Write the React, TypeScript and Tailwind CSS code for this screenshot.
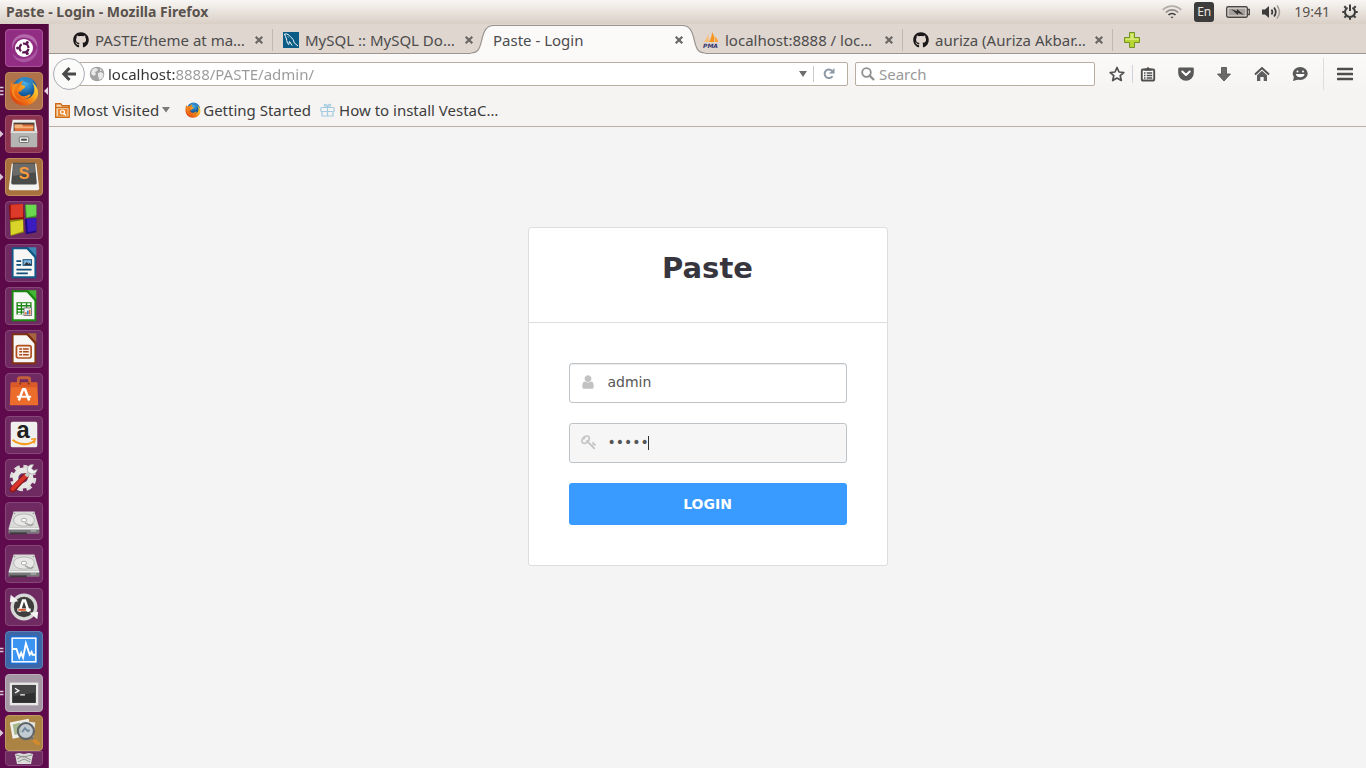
import type { ReactNode } from "react";
import { FaGithub } from "react-icons/fa";

/* ---------- small shared drawings ---------- */

function FirefoxLogo({ className }: { className?: string }) {
  return (
    <svg viewBox="0 0 32 32" className={className} aria-hidden="true">
      <defs>
        <radialGradient id="ffGlobe" cx="0.5" cy="0.25" r="0.75">
          <stop offset="0" stopColor="#4fb4e6" />
          <stop offset="0.5" stopColor="#1c6cb0" />
          <stop offset="1" stopColor="#0c2a5e" />
        </radialGradient>
        <linearGradient id="ffTail" x1="1" y1="0.1" x2="0.1" y2="0.9">
          <stop offset="0" stopColor="#ffe14a" />
          <stop offset="0.35" stopColor="#fbb021" />
          <stop offset="0.7" stopColor="#ee6a14" />
          <stop offset="1" stopColor="#d63d0c" />
        </linearGradient>
      </defs>
      <circle cx="17" cy="14" r="13" fill="url(#ffGlobe)" />
      <path d="M14 3c4-2 9-1 12 2-2 1-3 2-5 2s-5 0-7-4z" fill="#2f86c4" />
      <path
        d="M3 5c0 2 .3 3.300 1 4.500C5.500 8.500 8 8 10 8.500 11 7 13 5.500 15 5.200c-1.600 1.600-2 3.200-1.800 4.500 1.300.6 3.300.7 4 1.200.3 1.200-1.200 2.500-3.200 3.400-.8.5-.8 1.700-.8 2.500-1.200-.5-2.500-.3-3.200.4 1 3.200 3.800 4.700 6.800 4.300 3-.5 4.200-2.500 6.700-1.700-1.200 3.200-4.500 4.500-7.500 4.200 5.500 1 11-3 11-9.500 0-3.500-1-6-2.500-8 4 3 6.500 7 6.500 11.500C31 25 24.500 31.500 16 31.500S1 25 1 17C1 12 1.500 8 3 5z"
        fill="url(#ffTail)"
      />
      <path d="M4 9.500C2.500 13 2.500 19 6 23c3 3.500 8 5 12 4-6 .5-11-3-12-8-.6-3.500 0-6 4-10.500-2-.4-4.500 0-6 1z" fill="#f58a1f" />
      <path d="M10 8.500c-2 2-2.800 3.500-2.800 5.500l6-4.300c-.2-1.300.2-2.900 1.800-4.500-2 .3-4 1.800-5 3.300z" fill="#ef7a1a" />
    </svg>
  );
}

function CloseMark() {
  return (
    <svg viewBox="0 0 10 10" className="size-[10px]" aria-hidden="true">
      <path d="M2.500 2.500l5 5M7.500 2.500l-5 5" stroke="#6b6763" strokeWidth="2.200" strokeLinecap="square" />
    </svg>
  );
}

function PageCorner({ frame, fold, children }: { frame: string; fold: string; children: ReactNode }) {
  return (
    <svg viewBox="0 0 38 38" className="size-full">
      <path d="M6 2.500h18l8 8V35H6z" fill={frame} />
      <path d="M8 4.500h14.500L30 12v21H8z" fill="#f7f7f5" />
      <path d="M23 2.500h9V12z" fill={fold} />
      <path d="M20 2.500h3l9 10v3z" fill={frame} />
      {children}
    </svg>
  );
}

/* ---------- launcher ---------- */

function DiskIcon() {
  return (
    <svg viewBox="0 0 38 38" className="size-full">
      <path d="M8 9h22l5 17v6H3v-6z" fill="#d9d9d7" />
      <path d="M3 26h32v6H3z" fill="#77787a" />
      <path d="M3 26h32v2H3z" fill="#f2f2f2" />
      <path d="M4 31h18v2H4z" fill="#3b3b3d" />
      <ellipse cx="19" cy="18" rx="11" ry="6.500" fill="#e8e8e6" stroke="#b4b4b2" />
      <ellipse cx="19" cy="18" rx="3" ry="2" fill="#fafafa" stroke="#a9a9a8" />
      <path d="M20 21l6 3 3-2" stroke="#a3a3a2" strokeWidth="1.500" fill="none" />
      <circle cx="9" cy="11" r=".8" fill="#909090" />
      <circle cx="29" cy="11" r=".8" fill="#909090" />
      <path d="M26 29.500h6" stroke="#c9cacb" strokeWidth="1" />
    </svg>
  );
}

type Pip = "none" | "arrow" | "two" | "three";
interface App {
  name: string;
  tile: string;
  pip?: Pip;
  active?: boolean;
  icon: ReactNode;
}

const glass = "bg-[#6f2a62] border-[#864678]";

const apps: App[] = [
  {
    name: "Search your computer",
    tile: "bg-[#922d84] border-[#a8549a]",
    icon: (
      <svg viewBox="0 0 38 38" className="size-full">
        <path d="M7 21C4 10 13 2 24 5c7 2 10 8 9 14-2-8-9-12-16-11-6 1-10 6-10 13z" fill="#b56bab" />
        <path d="M33 17c2 9-5 17-14 17-6 0-11-4-12-9 4 5 9 6 14 5 6-1 11-6 12-13z" fill="#a955a0" />
        <circle cx="19" cy="19" r="9.500" fill="#fff" />
        <circle cx="19" cy="19" r="4.700" fill="none" stroke="#5f1a55" strokeWidth="2.400" strokeDasharray="8.300 1.540" strokeDashoffset="-.8" />
        <circle cx="12.200" cy="19" r="1.600" fill="#5f1a55" />
        <circle cx="22.400" cy="13.100" r="1.600" fill="#5f1a55" />
        <circle cx="22.400" cy="24.900" r="1.600" fill="#5f1a55" />
      </svg>
    ),
  },
  {
    name: "Firefox",
    tile: "bg-[#b0724a] border-[#c08a62]",
    pip: "three",
    active: true,
    icon: <FirefoxLogo className="size-full p-[3px]" />,
  },
  {
    name: "Files",
    tile: "bg-[#8c3350] border-[#a05068]",
    pip: "arrow",
    icon: (
      <svg viewBox="0 0 38 38" className="size-full">
        <path d="M7 4h24l2 12H5z" fill="#eeeeec" />
        <path d="M8 7h22v10H8z" fill="#4b4039" />
        <path d="M9 9h20v7H9z" fill="#e0703a" />
        <path d="M9 9h8l1 2h11v2H9z" fill="#f5b27c" />
        <path d="M5 16h28v16a1 1 0 0 1-1 1H6a1 1 0 0 1-1-1z" fill="#b5b5b3" />
        <path d="M5 16h28v2H5z" fill="#dededc" />
        <rect x="14" y="22" width="10" height="6" rx="1.500" fill="#eee" stroke="#6e6e6c" />
        <path d="M16 25h6" stroke="#444" strokeWidth="2" />
      </svg>
    ),
  },
  {
    name: "Sublime Text",
    tile: "bg-[#a8713e] border-[#bd8d5e]",
    pip: "arrow",
    icon: (
      <svg viewBox="0 0 38 38" className="size-full">
        <path d="M6 5h26l3 26a2 2 0 0 1-2 2H5a2 2 0 0 1-2-2z" fill="#f3f3f1" />
        <path d="M7.500 4h23l2 21a2 2 0 0 1-2 2h-23a2 2 0 0 1-2-2z" fill="#4b4b49" />
        <path d="M8 5h22l1 9-24 4z" fill="#6b6b69" />
        <text x="19" y="21" fontFamily="Liberation Sans, sans-serif" fontSize="17" fontWeight="bold" textAnchor="middle" fill="#f59a3c">S</text>
      </svg>
    ),
  },
  {
    name: "Code::Blocks",
    tile: glass,
    icon: (
      <svg viewBox="0 0 38 38" className="size-full">
        <path d="M3 3l15-1 1 16-15 1z" fill="#8d0e06" />
        <path d="M5 3l13-1v14l-13 1z" fill="#dd3a2a" />
        <path d="M20 3h12v13l-11 1z" fill="#3a9f26" />
        <path d="M21 3h11v11l-10 2z" fill="#6bd950" />
        <path d="M4 19l14-1 1 14-14 4z" fill="#8e890c" />
        <path d="M5 21l13-2v12l-13 4z" fill="#d8d42a" />
        <path d="M20 18l12-1v15l-11 2z" fill="#1d0a80" />
        <path d="M22 18l10-1v13l-9 2z" fill="#3a1cc0" />
      </svg>
    ),
  },
  {
    name: "LibreOffice Writer",
    tile: glass,
    icon: (
      <PageCorner frame="#0f5a86" fold="#3f86b5">
        <path d="M11 17h5M11 21h5M11 26h16M11 30h12" stroke="#124f78" strokeWidth="2" />
        <rect x="18" y="15.500" width="9" height="6" fill="#7db4da" stroke="#124f78" />
        <path d="M19 21l3-3 2 2 1-1 2 2z" fill="#333" />
      </PageCorner>
    ),
  },
  {
    name: "LibreOffice Calc",
    tile: glass,
    icon: (
      <PageCorner frame="#1a8a10" fold="#45b535">
        <path d="M11 15h16v13H11z" fill="#1d8714" />
        <path d="M12.500 17h3M17 17h4M22.500 17h3M12.500 20.500h3M17 20.500h4M22.500 20.500h3M12.500 24h3M17 24h4M12.500 27h3M17 27h4" stroke="#fff" strokeWidth="1.800" />
        <rect x="19" y="21" width="8" height="8" fill="#f6f6f6" stroke="#777" />
        <path d="M21 28v-2.500M25 28v-5" stroke="#e06a28" strokeWidth="1.800" />
        <path d="M23 28v-4" stroke="#2a79c8" strokeWidth="1.800" />
      </PageCorner>
    ),
  },
  {
    name: "LibreOffice Impress",
    tile: glass,
    icon: (
      <PageCorner frame="#7e3210" fold="#a7643e">
        <rect x="11" y="15.500" width="15.500" height="13" rx="2" fill="#fbeee6" stroke="#b0501f" strokeWidth="1.800" />
        <path d="M14 19h3M14 22h3M14 25h3M18 19h6M18 22h6M18 25h6" stroke="#a8481a" strokeWidth="1.600" />
      </PageCorner>
    ),
  },
  {
    name: "Ubuntu Software",
    tile: glass,
    icon: (
      <svg viewBox="0 0 38 38" className="size-full">
        <path d="M13 12V6a2 2 0 0 1 2-2h8a2 2 0 0 1 2 2v6" stroke="#c4603d" strokeWidth="3" fill="none" />
        <path d="M5 9h28l1 24H4z" fill="#ec6c2c" />
        <path d="M5 9h28v5H5z" fill="#d95a26" />
        <path d="M14 10h2M23 10h2" stroke="#8c3418" strokeWidth="2" />
        <path d="M13.500 28L18 16h2l4.500 12" stroke="#fff" strokeWidth="2.600" fill="none" strokeLinejoin="round" />
        <path d="M11.500 24h15" stroke="#fff" strokeWidth="2" />
      </svg>
    ),
  },
  {
    name: "Amazon",
    tile: glass,
    icon: (
      <svg viewBox="0 0 38 38" className="size-full">
        <rect x="5" y="5" width="28" height="27" rx="2" fill="#f0f0ee" />
        <text x="18" y="22" fontFamily="Liberation Sans, sans-serif" fontSize="25" fontWeight="bold" textAnchor="middle" fill="#1f1f1f">a</text>
        <path d="M7 24c7 6 17 6 23 1" stroke="#f49b1e" strokeWidth="2.200" fill="none" />
        <path d="M26.500 23.500l4.500-.5-1.500 5" stroke="#f49b1e" strokeWidth="1.600" fill="none" />
      </svg>
    ),
  },
  {
    name: "System Settings",
    tile: glass,
    icon: (
      <svg viewBox="0 0 38 38" className="size-full">
        <circle cx="18" cy="19" r="11" fill="none" stroke="#dcdcda" strokeWidth="6" strokeDasharray="5.200 3.440" />
        <circle cx="18" cy="19" r="8" fill="none" stroke="#e6e6e4" strokeWidth="6" />
        <path d="M7 31L21 17" stroke="#8e1512" strokeWidth="6" strokeLinecap="round" />
        <path d="M7 30.500L20 17.500" stroke="#d9342c" strokeWidth="4" strokeLinecap="round" />
        <path d="M21 17l6-6" stroke="#c9c9c9" strokeWidth="4" />
        <path d="M29 5c-4-1-8 3-6 7 2 4 9 4 10-2l-4 1-2-2z" fill="#f1f1f1" stroke="#9d9d9d" strokeWidth=".8" />
      </svg>
    ),
  },
  { name: "Disk 1", tile: glass, icon: <DiskIcon /> },
  { name: "Disk 2", tile: glass, icon: <DiskIcon /> },
  {
    name: "Software Updater",
    tile: glass,
    icon: (
      <svg viewBox="0 0 38 38" className="size-full">
        <circle cx="19" cy="19" r="12.500" fill="#3e3d3b" stroke="#d8d8d6" strokeWidth="3.500" />
        <path d="M4 14l1-8 8 7z" fill="#f4f4f2" />
        <path d="M34 24l-1 8-8-7z" fill="#f4f4f2" />
        <path d="M14 24l4-12h2l4 12" stroke="#fff" strokeWidth="2.600" fill="none" />
        <path d="M12 22h14" stroke="#fff" strokeWidth="3" />
        <path d="M13 22h8" stroke="#e2542a" strokeWidth="2" />
      </svg>
    ),
  },
  {
    name: "System Monitor",
    tile: "bg-[#3c66a6] border-[#5c82b8]",
    pip: "two",
    icon: (
      <svg viewBox="0 0 38 38" className="size-full">
        <rect x="4" y="4" width="30" height="30" rx="3" fill="#1d6fd6" />
        <rect x="6.500" y="6.500" width="25" height="25" fill="#3b93f2" stroke="#fff" strokeWidth="1.600" />
        <path d="M7 18h4l3 9 2-5 2 5 3-15 4 12 2-3 1 3h3" stroke="#fff" strokeWidth="2" fill="none" />
      </svg>
    ),
  },
  {
    name: "Terminal",
    tile: "bg-[#a598a5] border-[#b9aeb9]",
    pip: "two",
    icon: (
      <svg viewBox="0 0 38 38" className="size-full">
        <rect x="4" y="8" width="30" height="24" fill="#e8e8e6" />
        <rect x="6.500" y="10.500" width="25" height="19" fill="#2f2f2f" />
        <path d="M6.500 10.500h25v8l-25 4z" fill="#454545" />
        <path d="M9.500 14l4 2.500-4 2.500M15 21h5" stroke="#f2f2f2" strokeWidth="1.500" fill="none" />
      </svg>
    ),
  },
];

function PipMarks({ kind }: { kind: Pip }) {
  return (
    <svg viewBox="0 0 4 12" className="h-3 w-1" aria-hidden="true">
      {kind === "arrow" && <path d="M0 2.500L3.500 6 0 9.500z" fill="#d9c6d4" />}
      {kind === "two" && <path d="M0 4.500h3.500M0 7.500h3.500" stroke="#d9c6d4" strokeWidth="1.600" />}
      {kind === "three" && <path d="M0 2.500h3.500M0 6h3.500M0 9.500h3.500" stroke="#d9c6d4" strokeWidth="1.600" />}
    </svg>
  );
}

function Launcher() {
  return (
    <aside className="flex w-[49px] shrink-0 flex-col overflow-hidden border-r border-[#7a3a6c] bg-gradient-to-b from-[#54083f] via-[#5f0a4c] to-[#5f0a4c]">
      <nav aria-label="Launcher" className="flex flex-col gap-[5px] pt-[5px]">
        {apps.map((app) => (
          <div key={app.name} className="flex items-center">
            <span className="flex w-[5px] shrink-0">
              <PipMarks kind={app.pip ?? "none"} />
            </span>
            <button type="button" aria-label={app.name} className={`size-[38px] rounded-[4px] border ${app.tile}`}>
              {app.icon}
            </button>
            {app.active && (
              <svg viewBox="0 0 4 10" className="ml-px h-[10px] w-1" aria-hidden="true">
                <path d="M4 1L0 5l4 4z" fill="#e5d8e2" />
              </svg>
            )}
          </div>
        ))}
      </nav>
      <div className="flex items-center pt-[3px]">
        <span className="flex w-[5px] shrink-0">
          <PipMarks kind="arrow" />
        </span>
        <button type="button" aria-label="Image Viewer" className="h-9 w-[38px] rounded-[4px] border border-[#bd9a5e] bg-[#ab8345]">
          <svg viewBox="0 0 38 36" className="size-full">
            <path d="M4 7l20-4 2 17-19 4z" fill="#efefec" />
            <path d="M7 9l8-2 1 11-7 2z" fill="#a8b88e" />
            <path d="M16 5l15 2-2 15-12 1z" fill="#e2e2df" />
            <circle cx="21" cy="16" r="8.500" fill="#b9c4cc" fillOpacity=".8" stroke="#5d6266" strokeWidth="2.200" />
            <path d="M17 17l3-4 3 3 2-1" stroke="#6e8a9c" strokeWidth="2" fill="none" />
            <path d="M27 23l4 3" stroke="#777" strokeWidth="3" />
            <path d="M30 26l4 3" stroke="#d38a2a" strokeWidth="4" strokeLinecap="round" />
          </svg>
        </button>
      </div>
      <button type="button" aria-label="Trash" className="ml-[5px] h-[15px] w-[38px] rounded-b-[4px] border border-[#864678] bg-[#6f2a62]">
        <svg viewBox="0 0 36 13" className="size-full">
          <path d="M9 2l4-1 5 1 5-1 4 1-2 10H11z" fill="#dcdcda" />
          <path d="M10 3l7 2 9-2M11 7l6-3 8 4M12 10l6-3 6 3" stroke="#8e8e8e" fill="none" />
        </svg>
      </button>
    </aside>
  );
}

/* ---------- top panel ---------- */

function TopPanel() {
  return (
    <header className="flex h-6 shrink-0 items-center justify-between bg-gradient-to-b from-[#f8f6f4] to-[#d9cfc6] pr-[8px] pl-[6px] text-[#5a524c]">
      <h1 className="text-[14px] leading-6 font-bold">Paste - Login - Mozilla Firefox</h1>
      <div className="flex items-center">
        <svg viewBox="0 0 20 14" className="mr-3 h-[14px] w-5" fill="none" strokeWidth="1.700" aria-label="Wi-Fi">
          <path d="M.8 4.800c5-5 13.400-5 18.400 0" stroke="#b3ada8" />
          <path d="M3.800 7.500c3.500-3.500 8.900-3.500 12.400 0" stroke="#8c8783" />
          <path d="M6.500 10c2-2 5-2 7 0" stroke="#3c3c3c" />
          <path d="M8.500 11.800h3L10 13.600z" fill="#3c3c3c" />
        </svg>
        <span className="mr-3 flex h-5 w-5 items-center justify-center rounded-[3px] bg-[#3c3c3c] text-[12px] leading-5 text-[#ece6e0]">En</span>
        <svg viewBox="0 0 24 14" className="mr-3 h-[14px] w-6" aria-label="Battery">
          <rect x=".7" y="1.700" width="20.600" height="10.600" rx="1.500" fill="none" stroke="#4a4744" strokeWidth="1.400" />
          <rect x="2.500" y="3.500" width="17" height="7" fill="#a7a19c" />
          <path d="M21.500 4.500h1.800v5h-1.800" fill="none" stroke="#4a4744" strokeWidth="1.300" />
          <path d="M5 4l6 2.200V4l7 6-6-2v2z" fill="#33312f" />
        </svg>
        <svg viewBox="0 0 20 16" className="mr-3 h-4 w-5" aria-label="Sound">
          <path d="M0 5.500h3L7 2v12l-4-3.500H0z" fill="#3c3c3c" />
          <path d="M9.500 5.500q1.800 2.500 0 5M12 3.500q3.500 4.500 0 9" fill="none" stroke="#3c3c3c" strokeWidth="1.700" />
          <path d="M15 1.500q5 6.500 0 13" fill="none" stroke="#a39d98" strokeWidth="1.500" />
        </svg>
        <time className="mr-3 text-[14px] leading-6">19:41</time>
        <svg viewBox="0 0 16 16" className="size-4" fill="none" stroke="#3c3c3c" aria-label="Session">
          <path d="M5.500 3.700a5 5 0 1 0 5 0" strokeWidth="2" />
          <path d="M8 .5V7" strokeWidth="2" />
          <path d="M3.800 3.800L2.300 2.300M12.200 3.800l1.500-1.500M2.500 8H.3M13.500 8h2.200M4 12l-1.600 1.600M12 12l1.600 1.600M8 13.500v2.200" strokeWidth="2" />
        </svg>
      </div>
    </header>
  );
}

/* ---------- browser tabs ---------- */

const mysqlIcon = (
  <svg viewBox="0 0 16 16" className="size-4 shrink-0" aria-hidden="true">
    <rect width="16" height="16" fill="#0b5c86" />
    <path d="M1.500 2c3-.3 4.500.8 6 2.800 2.200 1.700 3.300 3.500 3.700 6L15 14M1.500 2c.3 2 1.700 3 2 5 .2 2 .9 4.500 2.200 5.500l.8-3 2.700 4M5 4.500l.6.9" stroke="#f2f8fb" strokeWidth="1" fill="none" />
  </svg>
);

const pmaIcon = (
  <svg viewBox="0 0 16 16" className="size-4 shrink-0" aria-hidden="true">
    <path d="M.5 10C3 7.500 4.500 4.500 5.500 1.500L6 10z" fill="#f9bf7c" />
    <path d="M6 10C8.200 6 9 3 9 0c2 3 2.800 6 2 10z" fill="#f79420" />
    <path d="M11.500 10c.5-2 .3-4-.2-6 2.200 1.500 3.700 4 4.200 6z" fill="#f9a63d" />
    <text x="7.500" y="15.500" fontFamily="DejaVu Sans, sans-serif" fontSize="6" fontWeight="bold" fontStyle="italic" textAnchor="middle" fill="#33336b">PMA</text>
  </svg>
);

const githubIcon = <FaGithub className="size-4 shrink-0 text-[#191717]" aria-hidden="true" />;

const tabs: { title: string; icon?: ReactNode; active?: boolean; divider?: boolean }[] = [
  { title: "PASTE/theme at ma…", icon: githubIcon, divider: true },
  { title: "MySQL :: MySQL Do…", icon: mysqlIcon },
  { title: "Paste - Login", active: true },
  { title: "localhost:8888 / loc…", icon: pmaIcon, divider: true },
  { title: "auriza (Auriza Akbar…", icon: githubIcon, divider: true },
];

function TabStrip() {
  return (
    <div className="flex h-[30px] shrink-0 items-stretch border-b border-[#9b948f] bg-[#dfd6d0] pl-[14px]">
      <div role="tablist" className="flex min-w-0">
        {tabs.map((tab) => (
          <div key={tab.title} className="relative flex w-[210px] min-w-0 items-center pt-[2px] pr-[9px] pl-[10px]">
            {tab.active && (
              <svg viewBox="0 0 234 29" preserveAspectRatio="none" className="absolute top-px -left-3 h-[29px] w-[234px]" aria-hidden="true">
                <path d="M0 29v-1C8 28 9 22 11 14 13 5 16 .5 23 .5h188c7 0 10 4.500 12 13.500 2 8 3 14 11 14v1z" fill="#fbfaf9" />
                <path d="M0 28C8 28 9 22 11 14 13 5 16 .5 23 .5h188c7 0 10 4.500 12 13.500 2 8 3 14 11 14" fill="none" stroke="#9b948f" strokeWidth="1.200" />
              </svg>
            )}
            <button
              type="button"
              role="tab"
              aria-selected={!!tab.active}
              className="relative flex min-w-0 flex-1 items-center gap-[6px] text-left text-[15px] leading-5 whitespace-nowrap text-[#4c4c4c]"
            >
              {tab.icon}
              <span>{tab.title}</span>
            </button>
            <button type="button" aria-label={`Close ${tab.title}`} className="relative shrink-0">
              <CloseMark />
            </button>
            {tab.divider && <span className="absolute top-[5px] right-0 h-[22px] w-px bg-[#c2b8b1]" />}
          </div>
        ))}
      </div>
      <button type="button" aria-label="New tab" className="flex items-center pt-[2px] pl-[11px]">
        <svg viewBox="0 0 16 16" className="size-4" aria-hidden="true">
          <path d="M5.500.5h5v5h5v5h-5v5h-5v-5h-5v-5h5z" fill="#b9d435" stroke="#6f9324" />
          <path d="M6.500 1.500h3v5h5v1.500h-13V6.500h5z" fill="#d6e878" />
        </svg>
      </button>
    </div>
  );
}

/* ---------- navigation ---------- */

const toolButtons: { label: string; icon: ReactNode }[] = [
  {
    label: "Bookmarks list",
    icon: (
      <>
        <rect x="1.800" y="3.500" width="12.400" height="11" rx="1" fill="#fafafa" stroke="#4f4f4f" strokeWidth="1.900" />
        <path d="M4.500 4.800V2.500h2L8 .8l1.500 1.700h2v2.300z" fill="#4f4f4f" />
        <path d="M4 7h1.500M4 9.500h1.500M4 12h1.500M6.700 7h5.500M6.700 9.500h5.500M6.700 12h5.500" stroke="#4f4f4f" strokeWidth="1.400" />
      </>
    ),
  },
  {
    label: "Save to Pocket",
    icon: (
      <>
        <path d="M1.500 1.500h13a1.300 1.300 0 0 1 1.300 1.300V7A7.800 7.800 0 0 1 .2 7V2.800a1.300 1.300 0 0 1 1.300-1.300z" fill="#595959" />
        <path d="M4.300 5.500L8 9l3.700-3.500" stroke="#fff" strokeWidth="2" fill="none" strokeLinecap="round" strokeLinejoin="round" />
      </>
    ),
  },
  { label: "Downloads", icon: <path d="M5.500 1.500h5V8h4L8 15 1.500 8h4z" fill="#6a6a6a" stroke="#4c4c4c" strokeWidth=".8" /> },
  {
    label: "Home",
    icon: (
      <>
        <path d="M1 8.500l7-6.500 7 6.500" stroke="#505050" strokeWidth="1.900" fill="none" />
        <path d="M3 9.200L8 4.700l5 4.500V15H9.700v-4H6.300v4H3z" fill="#5f5f5f" />
      </>
    ),
  },
  {
    label: "Chat",
    icon: (
      <>
        <ellipse cx="8.200" cy="7.500" rx="7.500" ry="6.500" fill="#595959" />
        <path d="M2 10.500L1 15l5.500-1.500z" fill="#595959" />
        <circle cx="5.500" cy="5.500" r="1" fill="#fff" />
        <circle cx="11" cy="5.500" r="1" fill="#fff" />
        <path d="M3.800 8h8.800c-.6 4.300-8.200 4.300-8.800 0z" fill="#fff" />
      </>
    ),
  },
];

function NavBar() {
  return (
    <div className="flex h-[38px] shrink-0 items-center bg-gradient-to-b from-[#fbfaf9] to-[#f5f4f2] pt-[2px] pl-1">
      <button type="button" aria-label="Back" className="z-10 flex size-8 shrink-0 items-center justify-center rounded-full border border-[#a9abb3] bg-[#fbfbfa]">
        <svg viewBox="0 0 16 16" className="size-4" aria-hidden="true">
          <path d="M8.500 2L2.800 8l5.700 6M3.500 8H15" stroke="#4a4a4a" strokeWidth="3" fill="none" />
        </svg>
      </button>
      <div className="-ml-[6px] flex h-6 min-w-0 flex-1 items-center rounded-r-[2px] border border-[#b9ada2] bg-white pl-[9px]">
        <svg viewBox="0 0 16 16" className="mr-[3px] size-4 shrink-0" aria-hidden="true">
          <circle cx="8" cy="8" r="7.300" fill="#a3a3a3" />
          <path d="M3 4l3-2 3 1-1 2-2 1 1 2-2 2-3-2zM9 7l3-1 2.500 2-1 4-3 2-1.500-4zM11 2.500l2 2-2 .5z" fill="#e9e9e9" />
        </svg>
        <input
          aria-label="Address"
          defaultValue="localhost:8888/PASTE/admin/"
          spellCheck={false}
          className="min-w-0 flex-1 bg-[linear-gradient(to_right,#333_67px,#999_67px)] bg-clip-text text-[15px] leading-5 text-transparent outline-none"
        />
        <svg viewBox="0 0 8 6" className="mr-[6px] h-[6px] w-2" aria-hidden="true">
          <path d="M0 0h8L4 6z" fill="#6e6e6e" />
        </svg>
        <span className="h-4 w-px bg-[#cfcac6]" />
        <button type="button" aria-label="Reload" className="flex pr-3 pl-[9px]">
          <svg viewBox="0 0 12 12" className="size-3" aria-hidden="true">
            <path d="M9.500 8.200A4.300 4.300 0 1 1 9 2.800" stroke="#8c98a6" strokeWidth="2" fill="none" />
            <path d="M11.500 0v5.500H6z" fill="#8c98a6" />
          </svg>
        </button>
      </div>
      <div className="ml-[7px] flex h-6 w-60 shrink-0 items-center gap-[4px] rounded-[2px] border border-[#b9ada2] bg-white pl-[5px]">
        <svg viewBox="0 0 14 14" className="size-[14px] shrink-0" aria-hidden="true">
          <circle cx="5.500" cy="5.500" r="4.300" stroke="#8f8f8f" strokeWidth="1.800" fill="none" />
          <path d="M8.800 8.800L13 13" stroke="#8f8f8f" strokeWidth="2.300" />
        </svg>
        <input type="search" aria-label="Search" placeholder="Search" className="min-w-0 flex-1 bg-transparent text-[15px] leading-5 outline-none placeholder:text-[#999]" />
      </div>
      <button type="button" aria-label="Bookmark this page" className="ml-[14px] shrink-0">
        <svg viewBox="0 0 16 16" className="size-4" aria-hidden="true">
          <path d="M8 1.500l2 4.500 4.800.5-3.600 3.200 1.100 4.800L8 12l-4.300 2.500 1.100-4.800L1.200 6.500 6 6z" fill="#fafafa" stroke="#505050" strokeWidth="1.700" strokeLinejoin="round" />
        </svg>
      </button>
      <span className="mx-[7px] h-[18px] w-px shrink-0 bg-[#cdd3d8]" />
      <div className="flex shrink-0 gap-[22px]">
        {toolButtons.map((b) => (
          <button key={b.label} type="button" aria-label={b.label}>
            <svg viewBox="0 0 16 16" className="size-4" aria-hidden="true">
              {b.icon}
            </svg>
          </button>
        ))}
      </div>
      <span className="mr-[13px] ml-[15px] h-8 w-px shrink-0 bg-[#e0dcd9]" />
      <button type="button" aria-label="Open menu" className="mr-[13px] shrink-0">
        <svg viewBox="0 0 16 16" className="size-4" aria-hidden="true">
          <path d="M1 3h14M1 8h14M1 13h14" stroke="#4d4d4d" strokeWidth="2.600" strokeLinecap="round" />
        </svg>
      </button>
    </div>
  );
}

function BookmarksBar() {
  return (
    <nav aria-label="Bookmarks" className="flex h-[35px] shrink-0 items-center border-b border-[#bdafa5] bg-[#f5f4f2] pt-[2px] pl-[6px] text-[15px] leading-5 whitespace-nowrap text-[#3d3d3d]">
      <a href="#most-visited" className="mr-[15px] flex items-center gap-[3px]">
        <svg viewBox="0 0 15 15" className="size-[15px]" aria-hidden="true">
          <path d="M.7 14.300V.7h5l1.500 2h7v11.600z" fill="#f6d9b4" stroke="#cf6a14" strokeWidth="1.400" />
          <path d="M1 4.500h13" stroke="#cf6a14" strokeWidth="1.400" />
          <rect x="3" y="6" width="9.500" height="7" fill="#e88a33" />
          <circle cx="7.500" cy="9" r="2" fill="none" stroke="#fff" strokeWidth="1.200" />
          <path d="M9 10.500l2 2" stroke="#fff" strokeWidth="1.200" />
        </svg>
        <span>Most Visited</span>
        <svg viewBox="0 0 8 6" className="h-[6px] w-2" aria-hidden="true">
          <path d="M0 0h8L4 5.500z" fill="#7a7a7a" />
        </svg>
      </a>
      <a href="#getting-started" className="mr-[9px] flex items-center gap-[2px]">
        <FirefoxLogo className="size-4" />
        Getting Started
      </a>
      <a href="#vesta" className="flex items-center gap-[4px]">
        <svg viewBox="0 0 15 15" className="size-[15px]" fill="none" stroke="#a5cbe0" strokeWidth="1.200" aria-hidden="true">
          <rect x=".8" y="4.500" width="13.400" height="4" rx="1" />
          <path d="M2 8.500V13h11V8.500M7.500 4.500V13M7.500 4.500C4 4 3.500 1 5.500 1.300 7 1.500 7.500 4.500 7.500 4.500S8 1.500 9.500 1.300C11.500 1 11 4 7.500 4.500z" />
        </svg>
        How to install VestaC…
      </a>
    </nav>
  );
}

/* ---------- login page ---------- */

const fieldClass =
  "h-10 w-full rounded-[3px] border border-[#bdc3c7] pt-0 pr-3 pb-[2px] pl-[38px] text-[14px] leading-5 text-[#555] outline-none";

function LoginCard() {
  return (
    <form
      onSubmit={(e) => e.preventDefault()}
      className="w-[360px] max-w-full rounded-[3px] border border-[#dddddd] bg-white font-['DejaVu_Sans',sans-serif]"
    >
      <div className="border-b border-[#dddddd] pt-5 pb-[34px] text-center">
        <h2 className="text-[29px] leading-10 font-bold text-[#37363e]">Paste</h2>
      </div>
      <div className="flex flex-col gap-5 p-10">
        <div className="relative">
          <input id="user" aria-label="Username" type="text" defaultValue="admin" className={`${fieldClass} bg-white shadow-[inset_0_1px_1px_#ececec]`} />
          <label htmlFor="user" className="absolute top-[11px] left-[11px]">
            <svg viewBox="0 0 1792 1792" className="size-4" fill="#c2c2c2" aria-hidden="true">
              <path d="M1536 1399q0 109-62.500 187t-150.500 78h-854q-88 0-150.500-78t-62.500-187q0-85 8.500-160.500t31.500-152 58.500-131 94-89 134.500-34.500q131 128 313 128t313-128q76 0 134.500 34.500t94 89 58.500 131 31.500 152 8.500 160.500zm-256-887q0 159-112.500 271.500t-271.500 112.500-271.500-112.500-112.500-271.500 112.500-271.500 271.500-112.500 271.500 112.500 112.500 271.500z" />
            </svg>
          </label>
        </div>
        <div className="relative">
          <input id="pass" aria-label="Password" type="password" defaultValue="admin" className={`${fieldClass} bg-[#f6f6f6] caret-transparent`} />
          <label htmlFor="pass" className="absolute top-[11px] left-3">
            <svg viewBox="0 0 1792 1792" className="size-4" fill="#c6c6c6" aria-hidden="true">
              <path d="M832 512q0-80-56-136t-136-56-136 56-56 136q0 42 19 83-41-19-83-19-80 0-136 56t-56 136 56 136 136 56 136-56 56-136q0-42-19-83 41 19 83 19 80 0 136-56t56-136zm851 704q0 17-49 66t-66 49q-9 0-28.500-16t-36.500-33-38.500-40-24.500-26l-96 96 220 220q28 28 28 68 0 42-39 81t-81 39q-40 0-68-28l-671-671q-176 131-365 131-163 0-265.500-102.500t-102.500-265.500q0-160 95-313t248-248 313-95q163 0 265.500 102.500t102.500 265.500q0 189-131 365l355 355 96-96q-3-3-26-24.500t-40-38.500-33-36.500-16-28.500q0-17 49-66t66-49q13 0 23 10 6 6 46 44.500t82 79.500 86.500 86 73 78 28.500 41z" />
            </svg>
          </label>
          <span className="absolute top-[13px] left-[79px] h-[14px] w-px bg-[#333]" />
        </div>
        <button type="submit" className="h-[42px] rounded-[3px] bg-[#399bff] text-[14px] leading-5 font-bold text-white">
          LOGIN
        </button>
      </div>
    </form>
  );
}

export default function App() {
  return (
    <div className="flex h-screen flex-col overflow-hidden font-['Noto_Sans',sans-serif]">
      <TopPanel />
      <div className="flex min-h-0 flex-1">
        <Launcher />
        <div className="flex min-w-0 flex-1 flex-col">
          <TabStrip />
          <NavBar />
          <BookmarksBar />
          <main className="flex flex-1 items-start justify-center bg-[#f4f4f4] pt-[100px]">
            <LoginCard />
          </main>
        </div>
      </div>
    </div>
  );
}
